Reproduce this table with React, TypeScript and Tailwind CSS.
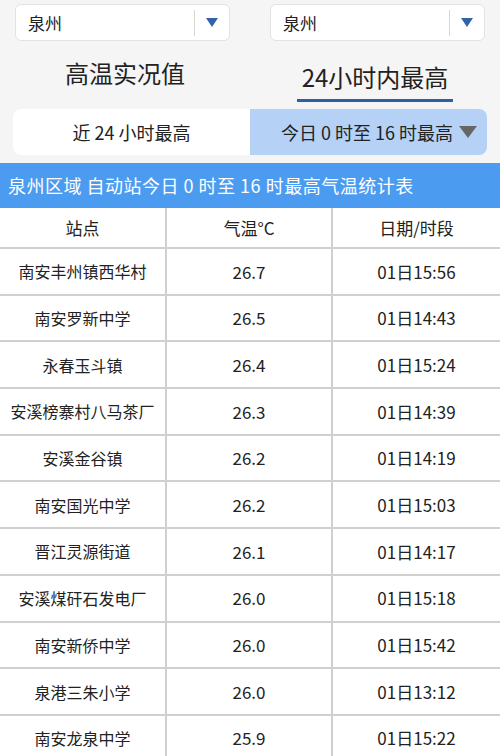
import React from "react";

const rows = [
  ["南安丰州镇西华村", "26.7", "01日15:56"],
  ["南安罗新中学", "26.5", "01日14:43"],
  ["永春玉斗镇", "26.4", "01日15:24"],
  ["安溪榜寨村八马茶厂", "26.3", "01日14:39"],
  ["安溪金谷镇", "26.2", "01日14:19"],
  ["南安国光中学", "26.2", "01日15:03"],
  ["晋江灵源街道", "26.1", "01日14:17"],
  ["安溪煤矸石发电厂", "26.0", "01日15:18"],
  ["南安新侨中学", "26.0", "01日15:42"],
  ["泉港三朱小学", "26.0", "01日13:12"],
  ["南安龙泉中学", "25.9", "01日15:22"],
];

function CitySelect() {
  return (
    <div className="flex items-center h-[37px] w-[215px] bg-white rounded-md border border-[#e2e2e2] pl-3">
      <span className="flex-1 text-[17px] text-[#222]">泉州</span>
      <div className="w-px h-[26px] bg-[#d6d6d6]" />
      <div className="w-[34px] flex justify-center">
        <svg width="12" height="9" viewBox="0 0 12 9">
          <path d="M0 0 L12 0 L6 9 Z" fill="#3462a8" />
        </svg>
      </div>
    </div>
  );
}

export default function App() {
  return (
    <div
      className="w-[500px] h-[756px] overflow-hidden bg-[#f5f5f5]"
      style={{ fontFamily: '"Noto Sans CJK SC", "Noto Sans", sans-serif' }}
    >
      <div className="flex justify-between pt-[4px] pl-[15px] pr-[15px]">
        <CitySelect />
        <CitySelect />
      </div>

      <div className="flex h-[62px]">
        <div className="w-1/2 flex items-center justify-center text-[24px] text-[#222] pt-[2px]">
          高温实况值
        </div>
        <div className="w-1/2 flex flex-col items-center justify-end">
          <div className="text-[24px] text-[#222] leading-none">24小时内最高</div>
          <div className="w-[156px] h-[3px] bg-[#2f5f9f] mt-[10px] mb-[1px]" />
        </div>
      </div>

      <div className="mx-[13px] mt-[6px] flex h-[46px] rounded-lg overflow-hidden">
        <div className="w-[237px] bg-white flex items-center justify-center text-[18px] text-[#222]">
          近 24 小时最高
        </div>
        <div className="flex-1 bg-[#b5d2f6] flex items-center justify-end pr-[10px] text-[18px] text-[#222]">
          今日 0 时至 16 时最高
          <svg width="18" height="12" viewBox="0 0 18 12" className="ml-[6px]">
            <path d="M0 0 L18 0 L9 12 Z" fill="#666" />
          </svg>
        </div>
      </div>

      <div className="mt-[8px] h-[45px] bg-[#4b9bf0] flex items-center pl-[8px] text-[18px] tracking-[0.5px] text-white">
        泉州区域 自动站今日 0 时至 16 时最高气温统计表
      </div>

      <div className="bg-white">
        <div className="flex h-[41px] border-b-[2px] border-[#d0d0d0] text-[17px] text-[#222]">
          <div className="w-[167px] flex items-center justify-center border-r-[2px] border-[#d0d0d0]">站点</div>
          <div className="w-[166px] flex items-center justify-center border-r-[2px] border-[#d0d0d0]">气温°C</div>
          <div className="flex-1 flex items-center justify-center">日期/时段</div>
        </div>
        {rows.map((r, idx) => (
          <div
            key={idx}
            className="flex h-[46.7px] border-b-[2px] border-[#d0d0d0] text-[16px] text-[#222]"
          >
            <div className="w-[167px] flex items-center justify-center border-r-[2px] border-[#d0d0d0] whitespace-nowrap">
              {r[0]}
            </div>
            <div className="w-[166px] flex items-center justify-center border-r-[2px] border-[#d0d0d0] text-[17px]">
              {r[1]}
            </div>
            <div className="flex-1 flex items-center justify-center text-[17px]">{r[2]}</div>
          </div>
        ))}
      </div>
    </div>
  );
}
